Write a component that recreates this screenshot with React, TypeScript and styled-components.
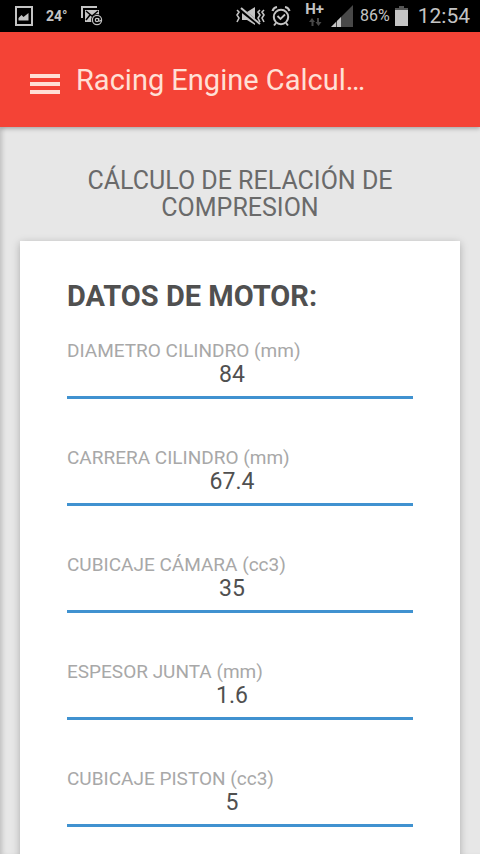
import React, { useState } from "react";
import styled, { createGlobalStyle } from "styled-components";

const GlobalStyle = createGlobalStyle`
  *, *::before, *::after { box-sizing: border-box; }
  html, body { margin: 0; }
  body {
    background: #e7e7e7;
    color: #555;
    font-family: Roboto, "Liberation Sans", sans-serif;
    overflow-x: hidden;
  }
`;

const Page = styled.div`
  display: flex;
  flex-direction: column;
  height: 100vh;
  overflow: hidden;
`;

const StatusBar = styled.div`
  display: flex;
  flex: none;
  align-items: center;
  justify-content: space-between;
  height: 32px;
  padding: 0 10px 0 15px;
  background: #000;
  color: #c4c4c4;
`;

const StatusGroup = styled.div<{ $gap: number }>`
  display: flex;
  align-items: center;
  gap: ${({ $gap }) => $gap}px;

  svg { display: block; }
`;

const Temperature = styled.span`
  font-size: 14px;
  font-weight: 700;
  line-height: 20px;
`;

const Battery = styled.span`
  padding-left: 2px;
  font-size: 16px;
  line-height: 20px;
`;

const Clock = styled.time`
  padding-left: 5px;
  font-size: 21px;
  line-height: 28px;
`;

const AppBar = styled.header`
  z-index: 1;
  display: flex;
  flex: none;
  align-items: center;
  gap: 16px;
  height: 95px;
  padding: 0 32px 0 30px;
  background: #f44336;
  color: #ffe0d6;
  box-shadow: 0 2px 4px rgba(0, 0, 0, 0.25);
`;

const MenuButton = styled.button`
  display: block;
  flex: none;
  padding: 8px 0 0;
  border: 0;
  background: none;
  color: inherit;
  cursor: pointer;

  svg { display: block; }
`;

const AppTitle = styled.h1`
  margin: 0;
  font-size: 29px;
  font-weight: 400;
  line-height: 36px;
  white-space: nowrap;
`;

const Content = styled.main`
  flex: 1;
  min-height: 0;
  padding: 40px 20px 0;
  overflow: hidden;
  background: #e7e7e7;
  box-shadow: inset 5px 0 5px -3px rgba(0, 0, 0, 0.18);
`;

const PageTitle = styled.h2`
  margin: 0 0 20px;
  padding: 0 60px;
  color: #6a6a6a;
  font-size: 25px;
  font-weight: 400;
  line-height: 27px;
  text-align: center;
`;

const Card = styled.form`
  padding: 38px 47px 48px;
  background: #fff;
  box-shadow: 0 2px 8px rgba(0, 0, 0, 0.26);
`;

const SectionTitle = styled.h3`
  margin: 0 0 26px;
  color: #505050;
  font-size: 29px;
  font-weight: 700;
  line-height: 34px;
`;

const Fields = styled.div`
  display: flex;
  flex-direction: column;
  gap: 47px;
`;

const Field = styled.label`
  display: flex;
  flex-direction: column;
`;

const FieldName = styled.span`
  color: #a8a8a8;
  font-size: 19px;
  line-height: 24px;
`;

const FieldInput = styled.input`
  width: 100%;
  height: 36px;
  padding: 0 16px 10px 0;
  border: 0;
  border-bottom: 3px solid #4092d0;
  border-radius: 0;
  outline: 0;
  background: none;
  color: #505050;
  font-family: inherit;
  font-size: 23px;
  line-height: 23px;
  text-align: center;
`;

const PictureIcon = () => (
  <svg width="18" height="20" viewBox="0 0 18 20" aria-hidden="true">
    <rect x="1" y="1" width="16" height="18" fill="none" stroke="currentColor" strokeWidth="2" />
    <path d="M3.5 14.5V12l3-3 2 2 5-4v7.500z" fill="currentColor" />
  </svg>
);

const MailIcon = () => (
  <svg width="22" height="20" viewBox="0 0 22 20" fill="none" stroke="currentColor" aria-hidden="true">
    <path d="M1 12V1h15" strokeWidth="2" />
    <path d="M4 4h14v6h-3l-4 6H4z" fill="currentColor" stroke="none" />
    <path d="M5 5l6 5 6-5M5 14l4-5" stroke="#000" strokeWidth="1.500" />
    <circle cx="16" cy="14" r="6" fill="#000" stroke="none" />
    <circle cx="16" cy="14" r="4.600" strokeWidth="1.200" />
    <circle cx="16" cy="14" r="1.700" strokeWidth="1.200" />
    <path d="M17.700 12v2.500q1.200 1.500 2.300-.5" strokeWidth="1.200" />
  </svg>
);

const MuteIcon = () => (
  <svg width="31" height="20" viewBox="0 0 31 20" fill="none" stroke="currentColor" aria-hidden="true">
    <path d="M7 6h5l8-5v18l-8-5H7z" fill="currentColor" stroke="none" />
    <path d="M5 3l20 16" stroke="#000" strokeWidth="4" />
    <path d="M6 2l19 16" strokeWidth="2" />
    <path d="M2 4l2 2-2 3 2 3-2 4M25 4l-2 2 2 3-2 3 2 4M29 4l-2 2 2 3-2 3 2 4" strokeWidth="1.600" />
  </svg>
);

const AlarmIcon = () => (
  <svg width="20" height="22" viewBox="0 0 20 22" fill="none" stroke="currentColor" aria-hidden="true">
    <circle cx="10" cy="12" r="7.200" strokeWidth="2" />
    <path d="M1.500 6q1-3.500 4.500-4M18.500 6q-1-3.500-4.500-4" strokeWidth="2.200" />
    <path d="M6.500 11l3 3 4.500-4.500" strokeWidth="1.800" />
    <path d="M5 18l-2 2.500M15 18l2 2.500" strokeWidth="2" />
  </svg>
);

const Network = styled.span`
  display: flex;
  flex-direction: column;
  align-items: center;
  gap: 2px;
  padding: 0 2px 4px 9px;
  font-size: 15px;
  font-weight: 700;
  line-height: 14px;
`;

const NetworkArrows = () => (
  <svg width="14" height="8" viewBox="0 0 14 8" fill="#484848" aria-hidden="true">
    <path d="M3.500 8V4H1l3-4 3 4H5.500v4zM9 0v4H7.500l3 4 3-4H11V0z" />
  </svg>
);

const SignalIcon = () => (
  <svg width="22" height="22" viewBox="0 0 22 22" aria-hidden="true">
    <path d="M0 22L22 0v22z" fill="#484848" />
    <path d="M0 22l5-5v5zM6 22v-6l4-4v10z" fill="currentColor" />
  </svg>
);

const BatteryIcon = () => (
  <svg width="13" height="20" viewBox="0 0 13 20" aria-hidden="true">
    <path d="M4 0h5v2h4v2H0V2h4z" fill="#555" />
    <path d="M0 4h13v16H0z" fill="currentColor" />
  </svg>
);

const MenuIcon = () => (
  <svg width="30" height="20" viewBox="0 0 30 20" fill="currentColor" aria-hidden="true">
    <path d="M0 0h30v4H0zM0 8h30v4H0zM0 16h30v4H0z" />
  </svg>
);

const initialFields = [
  { id: "diametro", name: "DIAMETRO CILINDRO (mm)", value: "84" },
  { id: "carrera", name: "CARRERA CILINDRO (mm)", value: "67.4" },
  { id: "camara", name: "CUBICAJE CÁMARA (cc3)", value: "35" },
  { id: "junta", name: "ESPESOR JUNTA (mm)", value: "1.6" },
  { id: "piston", name: "CUBICAJE PISTON (cc3)", value: "5" },
];

export default function App() {
  const [fields, setFields] = useState(initialFields);

  const update = (id: string, value: string) =>
    setFields((all) => all.map((f) => (f.id === id ? { ...f, value } : f)));

  return (
    <>
      <GlobalStyle />
      <Page>
        <StatusBar>
          <StatusGroup $gap={13}>
            <PictureIcon />
            <Temperature>24°</Temperature>
            <MailIcon />
          </StatusGroup>
          <StatusGroup $gap={5}>
            <MuteIcon />
            <AlarmIcon />
            <Network>
              H+
              <NetworkArrows />
            </Network>
            <SignalIcon />
            <Battery>86%</Battery>
            <BatteryIcon />
            <Clock>12:54</Clock>
          </StatusGroup>
        </StatusBar>
        <AppBar>
          <MenuButton type="button" aria-label="Menú">
            <MenuIcon />
          </MenuButton>
          <AppTitle>Racing Engine Calcul…</AppTitle>
        </AppBar>
        <Content>
          <PageTitle>CÁLCULO DE RELACIÓN DE COMPRESION</PageTitle>
          <Card>
            <SectionTitle>DATOS DE MOTOR:</SectionTitle>
            <Fields>
              {fields.map((f) => (
                <Field key={f.id} htmlFor={f.id}>
                  <FieldName>{f.name}</FieldName>
                  <FieldInput
                    id={f.id}
                    inputMode="decimal"
                    value={f.value}
                    onChange={(e) => update(f.id, e.target.value)}
                  />
                </Field>
              ))}
            </Fields>
          </Card>
        </Content>
      </Page>
    </>
  );
}
